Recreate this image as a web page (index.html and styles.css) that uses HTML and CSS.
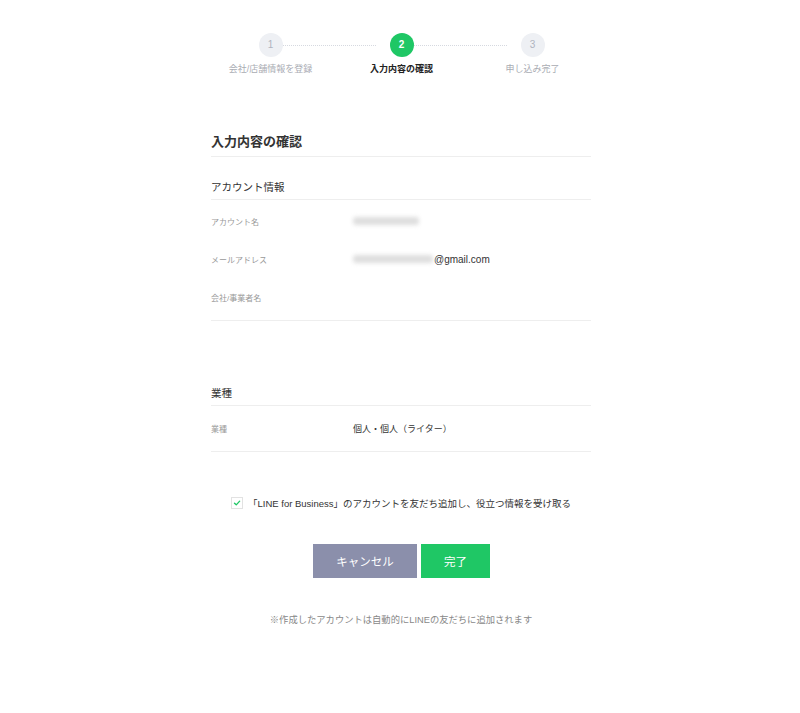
FILE: index.html
```html
<!DOCTYPE html>
<html lang="ja">
<head>
<meta charset="utf-8">
<title>入力内容の確認</title>
<link rel="stylesheet" href="styles.css">
</head>
<body>
<div class="page">
  <ol class="steps">
    <li class="step done"><span class="num">1</span><span class="step-label">会社/店舗情報を登録</span></li>
    <li class="step current"><span class="num">2</span><span class="step-label">入力内容の確認</span></li>
    <li class="step"><span class="num">3</span><span class="step-label">申し込み完了</span></li>
  </ol>

  <main class="content">
    <h1 class="title">入力内容の確認</h1>

    <section class="section">
      <h2 class="section-title">アカウント情報</h2>
      <dl class="rows first">
        <div class="row"><dt>アカウント名</dt><dd><span class="blur blur-name"></span></dd></div>
        <div class="row"><dt>メールアドレス</dt><dd><span class="blur blur-mail"></span>@gmail.com</dd></div>
        <div class="row"><dt>会社/事業者名</dt><dd></dd></div>
      </dl>
    </section>

    <section class="section second">
      <h2 class="section-title">業種</h2>
      <dl class="rows single">
        <div class="row"><dt>業種</dt><dd class="val-cjk">個人・個人（ライター）</dd></div>
      </dl>
    </section>

    <label class="agree">
      <span class="checkbox">
        <svg viewBox="0 0 12 12" width="12" height="12"><path d="M3 6.2 L5.1 8.2 L9.2 3.8" fill="none" stroke="#1fc765" stroke-width="1.6" stroke-linecap="round" stroke-linejoin="round"/></svg>
      </span>
      <span class="agree-text">「LINE for Business」のアカウントを友だち追加し、役立つ情報を受け取る</span>
    </label>

    <div class="actions">
      <button class="btn btn-cancel">キャンセル</button>
      <button class="btn btn-done">完了</button>
    </div>

    <p class="note">※作成したアカウントは自動的にLINEの友だちに追加されます</p>
  </main>
</div>
</body>
</html>
```

FILE: styles.css
```css
* { box-sizing: border-box; }
html, body { margin: 0; padding: 0; background: #fff; }
body {
  font-family: "Liberation Sans", "Noto Sans CJK JP", sans-serif;
  color: #333;
}
.page { width: 800px; padding-top: 33px; }

.steps {
  list-style: none;
  margin: 0 0 0 205px;
  padding: 0;
  display: flex;
  width: 393px;
}
.step {
  position: relative;
  width: 131px;
  display: flex;
  flex-direction: column;
  align-items: center;
}
.step + .step::before {
  content: "";
  position: absolute;
  top: 11.5px;
  left: -65px;
  width: 105px;
  border-top: 1px dotted #d6d9e0;
}
.num {
  width: 24px;
  height: 24px;
  border-radius: 50%;
  background: #eef0f4;
  color: #b0b4bf;
  font-size: 10px;
  line-height: 24px;
  text-align: center;
  position: relative;
  z-index: 1;
}
.step-label {
  margin-top: 6px;
  font-size: 9px;
  line-height: 12px;
  color: #a9acb3;
  white-space: nowrap;
}
.current .num { background: #1fc765; color: #fff; font-weight: bold; }
.current .step-label { color: #222; font-weight: bold; }

.content {
  width: 380px;
  margin: 58px 0 0 211px;
}
.title {
  margin: 0;
  font-size: 13px;
  line-height: 18px;
  font-weight: bold;
  color: #333;
  padding-bottom: 5px;
  border-bottom: 1px solid #eeeeee;
}
.section-title {
  margin: 0;
  padding-top: 23px;
  padding-bottom: 4px;
  font-size: 10.5px;
  line-height: 15px;
  font-weight: normal;
  color: #333;
  border-bottom: 1px solid #eeeeee;
}
.second { margin-top: 42px; }
.rows {
  margin: 0;
  padding: 2px 0 4px;
  border-bottom: 1px solid #eeeeee;
}
.rows.single { padding: 3px 0 4px; }
.row {
  display: flex;
  align-items: center;
  height: 38px;
}
.row dt {
  width: 142px;
  font-size: 8px;
  color: #999;
}
.row dd {
  margin: 0;
  display: flex;
  align-items: center;
  font-size: 10px;
  color: #333;
}
.row dd.val-cjk { font-size: 9px; }
.blur {
  display: inline-block;
  height: 8px;
  background: #dedede;
  filter: blur(2px);
  border-radius: 3px;
}
.blur-name { width: 66px; }
.blur-mail { width: 80px; margin-right: 1px; }

.agree {
  margin-top: 44px;
  display: flex;
  align-items: center;
  height: 14px;
  padding-left: 20px;
}
.checkbox {
  width: 12px;
  height: 12px;
  border: 1px solid #e2e2e2;
  background: #fff;
  display: flex;
  align-items: center;
  justify-content: center;
}
.checkbox svg { display: block; }
.agree-text {
  margin-left: 5px;
  font-size: 9.5px;
  color: #333;
  white-space: nowrap;
}

.actions {
  margin-top: 34px;
  display: flex;
  justify-content: center;
  gap: 4px;
  padding-left: 1px;
}
.btn {
  height: 34px;
  border: 0;
  font-family: inherit;
  font-size: 11.5px;
  font-weight: normal;
  color: #fff;
  cursor: pointer;
  padding: 0;
}
.btn-cancel { width: 104px; background: #8b8fab; }
.btn-done { width: 69px; background: #1fc765; }

.note {
  margin: 36px 0 0;
  text-align: center;
  font-size: 9.3px;
  line-height: 13px;
  color: #888;
}
```
